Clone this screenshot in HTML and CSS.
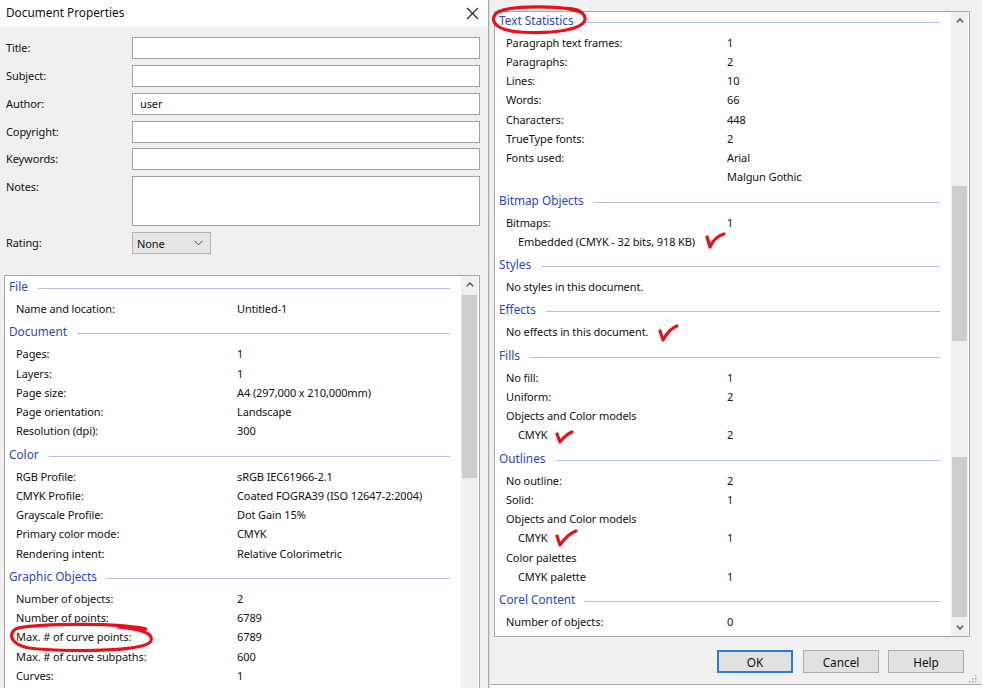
FILE: index.html
```html
<!DOCTYPE html>
<html lang="en">
<head>
<meta charset="utf-8">
<title>Document Properties</title>
<link rel="stylesheet" href="styles.css">
</head>
<body>
<div class="screen">
  <section class="pane pane-left">
    <header class="titlebar">
      <span class="title">Document Properties</span>
      <svg class="close" width="13" height="13" viewBox="0 0 13 13"><path d="M1 1L12 12M12 1L1 12" stroke="#222" stroke-width="1.1" fill="none"/></svg>
    </header>
    <div class="form">
      <div class="frow"><label>Title:</label><div class="input"></div></div>
      <div class="frow"><label>Subject:</label><div class="input"></div></div>
      <div class="frow"><label>Author:</label><div class="input">user</div></div>
      <div class="frow"><label>Copyright:</label><div class="input"></div></div>
      <div class="frow frow-kw"><label>Keywords:</label><div class="input"></div></div>
      <div class="frow frow-notes"><label>Notes:</label><div class="input notes"></div></div>
      <div class="frow frow-rating"><label>Rating:</label>
        <div class="select"><span>None</span>
          <svg width="9" height="6" viewBox="0 0 9 6"><path d="M0.5 0.8L4.5 4.8L8.5 0.8" stroke="#444" stroke-width="1" fill="none"/></svg>
        </div>
      </div>
    </div>
    <div class="listbox listbox-left">
      <div class="list list-left">
        <div class="sec first"><span>File</span></div>
        <div class="row"><span>Name and location:</span><span>Untitled-1</span></div>
        <div class="sec"><span>Document</span></div>
        <div class="row"><span>Pages:</span><span>1</span></div>
        <div class="row"><span>Layers:</span><span>1</span></div>
        <div class="row"><span>Page size:</span><span>A4 (297,000 x 210,000mm)</span></div>
        <div class="row"><span>Page orientation:</span><span>Landscape</span></div>
        <div class="row"><span>Resolution (dpi):</span><span>300</span></div>
        <div class="sec"><span>Color</span></div>
        <div class="row"><span>RGB Profile:</span><span>sRGB IEC61966-2.1</span></div>
        <div class="row"><span>CMYK Profile:</span><span>Coated FOGRA39 (ISO 12647-2:2004)</span></div>
        <div class="row"><span>Grayscale Profile:</span><span>Dot Gain 15%</span></div>
        <div class="row"><span>Primary color mode:</span><span>CMYK</span></div>
        <div class="row"><span>Rendering intent:</span><span>Relative Colorimetric</span></div>
        <div class="sec"><span>Graphic Objects</span></div>
        <div class="row"><span>Number of objects:</span><span>2</span></div>
        <div class="row"><span>Number of points:</span><span>6789</span></div>
        <div class="row"><span>Max. # of curve points:</span><span>6789</span></div>
        <div class="row"><span>Max. # of curve subpaths:</span><span>600</span></div>
        <div class="row"><span>Curves:</span><span>1</span></div>
        <div class="row"><span></span><span></span></div>
      </div>
      <div class="scrollbar sb-left">
        <div class="sb-btn"><svg width="8" height="5" viewBox="0 0 8 5"><path d="M0.8 4.2L4 1L7.2 4.2" stroke="#555" stroke-width="1.5" fill="none"/></svg></div>
        <div class="thumb thumb-left"></div>
      </div>
    </div>
  </section>

  <div class="divider"></div>

  <section class="pane pane-right">
    <div class="listbox listbox-right">
      <div class="list list-right">
        <div class="sec first"><span>Text Statistics</span></div>
        <div class="row"><span>Paragraph text frames:</span><span>1</span></div>
        <div class="row"><span>Paragraphs:</span><span>2</span></div>
        <div class="row"><span>Lines:</span><span>10</span></div>
        <div class="row"><span>Words:</span><span>66</span></div>
        <div class="row"><span>Characters:</span><span>448</span></div>
        <div class="row"><span>TrueType fonts:</span><span>2</span></div>
        <div class="row"><span>Fonts used:</span><span>Arial</span></div>
        <div class="row"><span></span><span>Malgun Gothic</span></div>
        <div class="sec"><span>Bitmap Objects</span></div>
        <div class="row"><span>Bitmaps:</span><span>1</span></div>
        <div class="row sub wide"><span>Embedded (CMYK - 32 bits, 918 KB)</span></div>
        <div class="sec"><span>Styles</span></div>
        <div class="row wide"><span>No styles in this document.</span></div>
        <div class="sec"><span>Effects</span></div>
        <div class="row wide"><span>No effects in this document.</span></div>
        <div class="sec"><span>Fills</span></div>
        <div class="row"><span>No fill:</span><span>1</span></div>
        <div class="row"><span>Uniform:</span><span>2</span></div>
        <div class="row wide"><span>Objects and Color models</span></div>
        <div class="row sub"><span>CMYK</span><span>2</span></div>
        <div class="sec"><span>Outlines</span></div>
        <div class="row"><span>No outline:</span><span>2</span></div>
        <div class="row"><span>Solid:</span><span>1</span></div>
        <div class="row wide"><span>Objects and Color models</span></div>
        <div class="row sub"><span>CMYK</span><span>1</span></div>
        <div class="row wide"><span>Color palettes</span></div>
        <div class="row sub"><span>CMYK palette</span><span>1</span></div>
        <div class="sec"><span>Corel Content</span></div>
        <div class="row"><span>Number of objects:</span><span>0</span></div>
      </div>
      <div class="scrollbar sb-right">
        <div class="sb-btn"><svg width="8" height="5" viewBox="0 0 8 5"><path d="M0.8 4.2L4 1L7.2 4.2" stroke="#555" stroke-width="1.5" fill="none"/></svg></div>
        <div class="track">
          <div class="thumb thumb-r1"></div>
          <div class="gap-r"></div>
          <div class="thumb thumb-r2"></div>
        </div>
        <div class="sb-btn"><svg width="8" height="5" viewBox="0 0 8 5"><path d="M0.8 0.8L4 4L7.2 0.8" stroke="#555" stroke-width="1.5" fill="none"/></svg></div>
      </div>
    </div>
    <div class="buttons">
      <button class="btn btn-default">OK</button>
      <button class="btn">Cancel</button>
      <button class="btn">Help</button>
    </div>
    <div class="bottom-edge">
      <svg class="grip" width="8" height="8" viewBox="0 0 8 8"><g fill="#aaa"><rect x="6" y="0" width="1.5" height="1.5"/><rect x="3" y="3" width="1.5" height="1.5"/><rect x="6" y="3" width="1.5" height="1.5"/><rect x="0" y="6" width="1.5" height="1.5"/><rect x="3" y="6" width="1.5" height="1.5"/><rect x="6" y="6" width="1.5" height="1.5"/></g></svg>
    </div>
  </section>

  <svg class="marks" width="982" height="688" viewBox="0 0 982 688">
    <g stroke="#e5121c" stroke-width="3.2" fill="none" stroke-linecap="round" stroke-linejoin="round">
      <path d="M582 13 C568 5 512 5 498 12 C489 18 492 30 520 32 C552 34 586 30 585 18 C584 11 574 8 562 8"/>
      <path d="M146 629 C120 623 45 623 18 628 C7 632 8 647 38 649 C80 652 146 651 151 641 C154 633 140 629 118 627"/>
      <path d="M707 237 L710 247 C713 240 717 236 724 234"/>
      <path d="M660 331 L663 340 C667 333 671 328 677 326"/>
      <path d="M557 434 L560 442 C564 437 567 434 572 432"/>
      <path d="M557 536 L560 545 C565 538 570 533 576 531"/>
    </g>
  </svg>
</div>
</body>
</html>
```

FILE: styles.css
```css
* { box-sizing: border-box; }
html, body { margin: 0; padding: 0; }
body {
  width: 982px;
  height: 688px;
  overflow: hidden;
  background: #f0f0f0;
  font-family: "Segoe UI", "Noto Sans", "DejaVu Sans", sans-serif;
  font-size: 11px;
  letter-spacing: -0.1px;
  color: #111;
}
.screen {
  position: relative;
  width: 982px;
  height: 688px;
  display: flex;
  overflow: hidden;
}
.pane { height: 688px; overflow: hidden; background: #f0f0f0; }
.pane-left { width: 488px; flex: none; }
.divider {
  width: 2px;
  flex: none;
  background: #dcdcdc;
  border-left: 1px solid #a9a9a9;
}
.pane-right { width: 492px; flex: none; position: relative; }

/* title bar */
.titlebar {
  height: 26px;
  background: #fff;
  display: flex;
  align-items: center;
  justify-content: space-between;
  padding: 0 9px 2px 6px;
  font-size: 11.8px;
  letter-spacing: 0;
  color: #111;
}
.close { display: block; margin-top: 2px; }

/* form */
.form {
  padding: 11px 0 0 6px;
  display: flex;
  flex-direction: column;
  gap: 6px;
}
.frow {
  display: grid;
  grid-template-columns: 126px 348px;
  align-items: center;
  height: 22px;
}
.frow label { line-height: 16px; }
.frow-kw { margin-top: -1px; }
.input {
  height: 22px;
  background: #fff;
  border: 1px solid #a2a2a2;
  padding: 0 7px;
  line-height: 20px;
}
.frow-notes { height: 50px; align-items: start; }
.frow-notes label { padding-top: 3px; }
.input.notes { height: 50px; }
.select {
  width: 79px;
  height: 22px;
  background: #e6e6e6;
  border: 1px solid #b3b3b3;
  display: flex;
  align-items: center;
  justify-content: space-between;
  padding: 0 7px 0 4px;
}
.select svg { display: block; }

/* list boxes */
.listbox {
  background: #fff;
  border: 1px solid #a6a6a6;
  display: flex;
  overflow: hidden;
  width: 476px;
}
.listbox-left {
  margin: 21px 0 0 4px;
  height: 440px;
}
.listbox-right {
  margin: 11px 0 0 4px;
  height: 626px;
}
.list {
  flex: 1;
  min-width: 0;
}
.list-right { margin-top: -2.5px; }

.sec {
  display: flex;
  align-items: flex-start;
  height: 26px;
  padding: 3px 11px 0 4px;
  color: #2a48b3;
  font-size: 11.8px;
  letter-spacing: 0;
}
.sec.first { height: 23px; padding-top: 0; }
.sec span { line-height: 20px; white-space: nowrap; }
.sec::after {
  content: "";
  flex: 1;
  height: 1px;
  margin: 12px 0 0 10px;
  background: #b3c0de;
}
.row {
  display: grid;
  grid-template-columns: 232px 1fr;
  height: 19.25px;
  line-height: 19.25px;
  white-space: nowrap;
}
.row > span:first-child { padding-left: 11px; }
.row.sub > span:first-child { padding-left: 23px; }
.row.wide { grid-template-columns: 1fr; }

/* scrollbars */
.scrollbar {
  width: 17px;
  flex: none;
  background: #f0f0f0;
  display: flex;
  flex-direction: column;
  margin-right: 1px;
}
.sb-btn {
  height: 17px;
  display: flex;
  align-items: center;
  justify-content: center;
  flex: none;
}
.sb-btn svg { display: block; }
.thumb { background: #cdcdcd; margin: 0 1px; }
.thumb-left { margin-top: 2px; height: 183px; }
.track {
  flex: 1;
  display: flex;
  flex-direction: column;
  padding: 157px 0 2px;
}
.thumb-r1 { height: 155px; }
.gap-r { height: 116px; }
.thumb-r2 { flex: 1; }

/* buttons */
.buttons {
  display: flex;
  justify-content: flex-end;
  gap: 9px;
  padding: 13px 18px 0 0;
}
.btn {
  width: 76px;
  height: 23px;
  background: #e1e1e1;
  border: 1px solid #adadad;
  font-family: inherit;
  font-size: 11.8px;
  color: #111;
  padding: 0;
}
.btn-default {
  border: 2px solid #2b7bd4;
  margin-right: 1px;
}
.bottom-edge {
  position: relative;
  margin-top: 11px;
  height: 5px;
  border-top: 1px solid #a9a9a9;
  background: #fdfdfd;
}
.grip { position: absolute; right: 5px; top: -10px; }

/* annotations */
.marks {
  position: absolute;
  left: 0;
  top: 0;
  pointer-events: none;
}
```
